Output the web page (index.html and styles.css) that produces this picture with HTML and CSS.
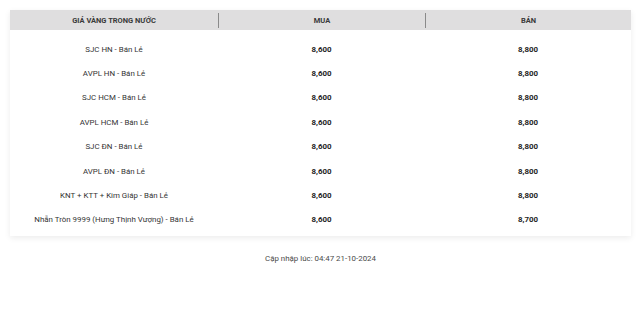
FILE: index.html
```html
<!DOCTYPE html>
<html lang="vi">
<head>
<meta charset="utf-8">
<link rel="stylesheet" href="styles.css">
</head>
<body>
<div class="card">
  <div class="head">
    <div class="hcell">GIÁ VÀNG TRONG NƯỚC</div>
    <div class="hcell div">MUA</div>
    <div class="hcell div">BÁN</div>
  </div>
  <div class="body">
    <div class="row"><div class="name">SJC HN - Bán Lẻ</div><div class="num">8,600</div><div class="num">8,800</div></div>
    <div class="row"><div class="name">AVPL HN - Bán Lẻ</div><div class="num">8,600</div><div class="num">8,800</div></div>
    <div class="row"><div class="name">SJC HCM - Bán Lẻ</div><div class="num">8,600</div><div class="num">8,800</div></div>
    <div class="row"><div class="name">AVPL HCM - Bán Lẻ</div><div class="num">8,600</div><div class="num">8,800</div></div>
    <div class="row"><div class="name">SJC ĐN - Bán Lẻ</div><div class="num">8,600</div><div class="num">8,800</div></div>
    <div class="row"><div class="name">AVPL ĐN - Bán Lẻ</div><div class="num">8,600</div><div class="num">8,800</div></div>
    <div class="row"><div class="name">KNT + KTT + Kim Giáp - Bán Lẻ</div><div class="num">8,600</div><div class="num">8,800</div></div>
    <div class="row"><div class="name">Nhẫn Tròn 9999 (Hưng Thịnh Vượng) - Bán Lẻ</div><div class="num">8,600</div><div class="num">8,700</div></div>
  </div>
</div>
<div class="foot">Cập nhập lúc: 04:47 21-10-2024</div>
</body>
</html>
```
FILE: styles.css
```css
html, body { margin: 0; padding: 0; background: #fff; }
body { padding: 10px 9px 0 10px; font-family: Roboto, "Noto Sans", sans-serif; font-size: 7.9px; color: #333; }
.card { background: #fff; box-shadow: 0 2px 6px rgba(0,0,0,0.08); }
.head { display: grid; grid-template-columns: 208px 207px 1fr; height: 20px; background: #dfdedf; }
.hcell { display: flex; align-items: center; justify-content: center; font-weight: bold; font-size: 7.5px; color: #3a3a3a; }
.hcell.div { border-left: 1px solid #8a8a8a; margin: 3px 0 2px; }
.body { padding: 7px 0 4px; }
.row { display: grid; grid-template-columns: 208px 207px 1fr; height: 24.4px; align-items: center; }
.name { text-align: center; color: #333; }
.num { text-align: center; font-weight: bold; color: #1e1e1e; }
.foot { text-align: center; color: #4a4a4a; margin-top: 18px; }
```
